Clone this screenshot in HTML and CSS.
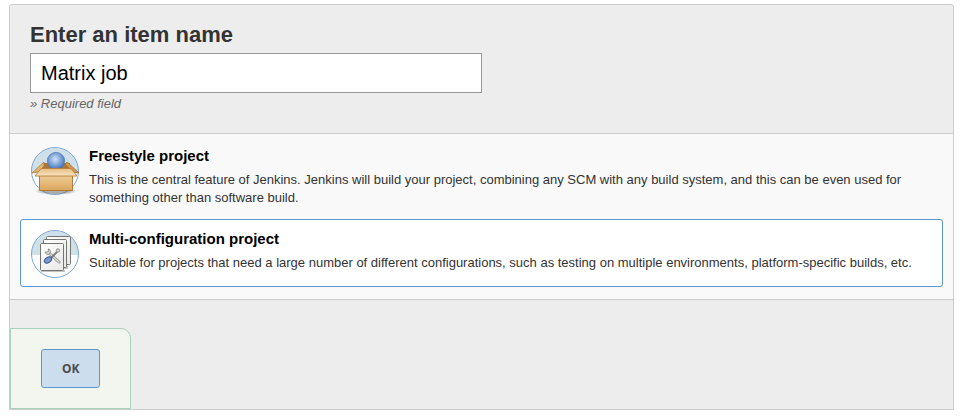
FILE: index.html
```html
<!DOCTYPE html>
<html lang="en">
<head>
  <meta charset="UTF-8">
  <meta name="viewport" content="width=device-width, initial-scale=1.0">
  <title>New Item</title>
  <link rel="stylesheet" href="styles.css">
</head>
<body>
  <form class="new-item">
    <header class="name-section">
      <label class="name-label" for="name">Enter an item name</label>
      <input class="name-input" id="name" type="text" value="Matrix job">
      <p class="name-help">» Required field</p>
    </header>

    <main class="items">
      <label class="item">
        <input class="item-radio" type="radio" name="mode" value="freestyle">
        <svg class="item-icon" viewBox="0 0 48 48" aria-hidden="true">
          <defs>
            <linearGradient id="box" x1="0" y1="0" x2="0" y2="1">
              <stop offset="0" stop-color="#efcf9c"/>
              <stop offset="1" stop-color="#dca65a"/>
            </linearGradient>
            <linearGradient id="flap" x1="0" y1="0" x2="0" y2="1">
              <stop offset="0" stop-color="#e6bb80"/>
              <stop offset="1" stop-color="#fae5c2"/>
            </linearGradient>
            <radialGradient id="ball" cx=".45" cy=".4" r=".6">
              <stop offset="0" stop-color="#d3e2f5"/>
              <stop offset=".5" stop-color="#86abdc"/>
              <stop offset="1" stop-color="#4672b2"/>
            </radialGradient>
            <radialGradient id="shade">
              <stop offset=".6" stop-color="#777" stop-opacity=".6"/>
              <stop offset="1" stop-color="#777" stop-opacity="0"/>
            </radialGradient>
          </defs>
          <circle cx="24" cy="24" r="24" fill="#fff"/>
          <path d="M0 25a24 24 0 0 1 48 0z" fill="#cfe0e8"/>
          <circle cx="24" cy="24" r="23.5" fill="none" stroke="#7ba7d8"/>
          <ellipse cx="25" cy="44" rx="21" ry="4" fill="url(#shade)"/>
          <path d="M11 16h28v9H11z" fill="#a8763a"/>
          <path d="M13 15L1 26l6-1 6-6z" fill="#e3b676" stroke="#ad7732" stroke-width=".8"/>
          <path d="M36 15l12 11-6-1-8-8z" fill="#d19a50" stroke="#a66f2b" stroke-width=".8"/>
          <circle cx="25" cy="14" r="8.7" fill="url(#ball)" stroke="#4774b3" stroke-width=".6"/>
          <path d="M8.5 28h33v15.500h-33z" fill="url(#box)" stroke="#b37c34"/>
          <path d="M10 21.5h30l6 7.500H4z" fill="url(#flap)" stroke="#b7803b" stroke-width=".9"/>
        </svg>
        <span class="item-text">
          <span class="item-title">Freestyle project</span>
          <span class="item-desc">This is the central feature of Jenkins. Jenkins will build your project, combining any SCM with any build system, and this can be even used for something other than software build.</span>
        </span>
      </label>

      <label class="item">
        <input class="item-radio" type="radio" name="mode" value="matrix" checked>
        <svg class="item-icon" viewBox="0 0 48 48" aria-hidden="true">
          <defs>
            <linearGradient id="paper" x1="0" y1="0" x2="1" y2="1">
              <stop offset="0" stop-color="#fff"/>
              <stop offset="1" stop-color="#e8e8e6"/>
            </linearGradient>
          </defs>
          <circle cx="24" cy="24" r="24" fill="#fff"/>
          <path d="M0 25a24 24 0 0 1 48 0z" fill="#cfe0e8"/>
          <circle cx="24" cy="24" r="23.5" fill="none" stroke="#7ba7d8"/>
          <path d="M10 40h24v2H10zM33 36h4v3h-4z" fill="#888" opacity=".5"/>
          <g fill="url(#paper)" stroke="#737571">
            <rect x="15.5" y="6.5" width="24" height="28" rx="1"/>
            <rect x="12.5" y="9.5" width="23" height="28" rx="1"/>
            <rect x="9.5" y="13.5" width="23" height="27" rx="1"/>
          </g>
          <path d="M18 23l10 9" stroke="#90928e" stroke-width="3" stroke-linecap="round"/>
          <path d="M18 23l10 9" stroke="#dededb" stroke-width="1.4" stroke-linecap="round"/>
          <path d="M14 22c1 3 4 3 5 1 1-2 0-4-2-4l1 2-2 1z" fill="#ddd" stroke="#858783" stroke-width=".9"/>
          <path d="M19 29l7-7" stroke="#777975" stroke-width="1.8"/>
          <circle cx="27" cy="20.5" r="1.7" fill="#ddd" stroke="#858783" stroke-width=".9"/>
          <ellipse cx="17" cy="30" rx="4" ry="2.6" transform="rotate(-35 17 30)" fill="#7b98cc" stroke="#395a94"/>
        </svg>
        <span class="item-text">
          <span class="item-title">Multi-configuration project</span>
          <span class="item-desc">Suitable for projects that need a large number of different configurations, such as testing on multiple environments, platform-specific builds, etc.</span>
        </span>
      </label>
    </main>

    <footer class="footer">
      <div class="button-box">
        <button class="ok-button" type="button">OK</button>
      </div>
    </footer>
  </form>
</body>
</html>
```
FILE: styles.css
```css
* {
  box-sizing: border-box;
}

body {
  margin: 4px 10px 8px 9px;
  font-family: "Liberation Sans", Arial, Helvetica, sans-serif;
  font-size: 13px;
  line-height: 18px;
  color: #333;
  background: #fff;
}

.new-item {
  border: 1px solid #ccc;
  border-radius: 3px 3px 0 0;
  background: #ededed;
}

.name-section {
  padding: 16px 20px 20px;
}

.name-label {
  display: block;
  margin-bottom: 4px;
  font-size: 22px;
  font-weight: bold;
  line-height: 28px;
}

.name-input {
  display: block;
  width: 50%;
  height: 40px;
  padding: 0 10px;
  border: 1px solid #999;
  font-family: inherit;
  font-size: 20px;
  color: #000;
  background: #fff;
}

.name-help {
  margin: 2px 0 0;
  font-style: italic;
  color: #666;
}

.items {
  display: flex;
  flex-direction: column;
  gap: 3px;
  padding: 2px 10px 12px;
  border-top: 1px solid #ccc;
  border-bottom: 1px solid #ccc;
  background: #f9f9f9;
}

.item {
  position: relative;
  display: flex;
  gap: 10px;
  padding: 10px 10px 8px;
  border: 1px solid transparent;
  border-radius: 3px;
  cursor: pointer;
}

.item:has(.item-radio:checked) {
  border-color: #5c97cf;
  background: #fff;
}

.item-radio {
  position: absolute;
  margin: 0;
  opacity: 0;
}

.item-icon {
  flex: none;
  width: 48px;
  height: 48px;
}

.item-text {
  display: flex;
  flex-direction: column;
  gap: 6px;
}

.item-title {
  font-size: 15px;
  font-weight: bold;
  color: #000;
}

.footer {
  display: flex;
  padding-top: 28px;
}

.button-box {
  padding: 20px 30px;
  border: 1px solid #a9d0ba;
  border-radius: 0 10px 0 0;
  background: #f2f6ef;
}

.ok-button {
  display: block;
  padding: 10px 20px;
  border: 1px solid #5c97cf;
  border-radius: 3px;
  font-family: "Noto Sans", sans-serif;
  font-size: 12px;
  font-weight: bold;
  line-height: 17px;
  color: #4d4d4d;
  background: #ccdded;
}
```
